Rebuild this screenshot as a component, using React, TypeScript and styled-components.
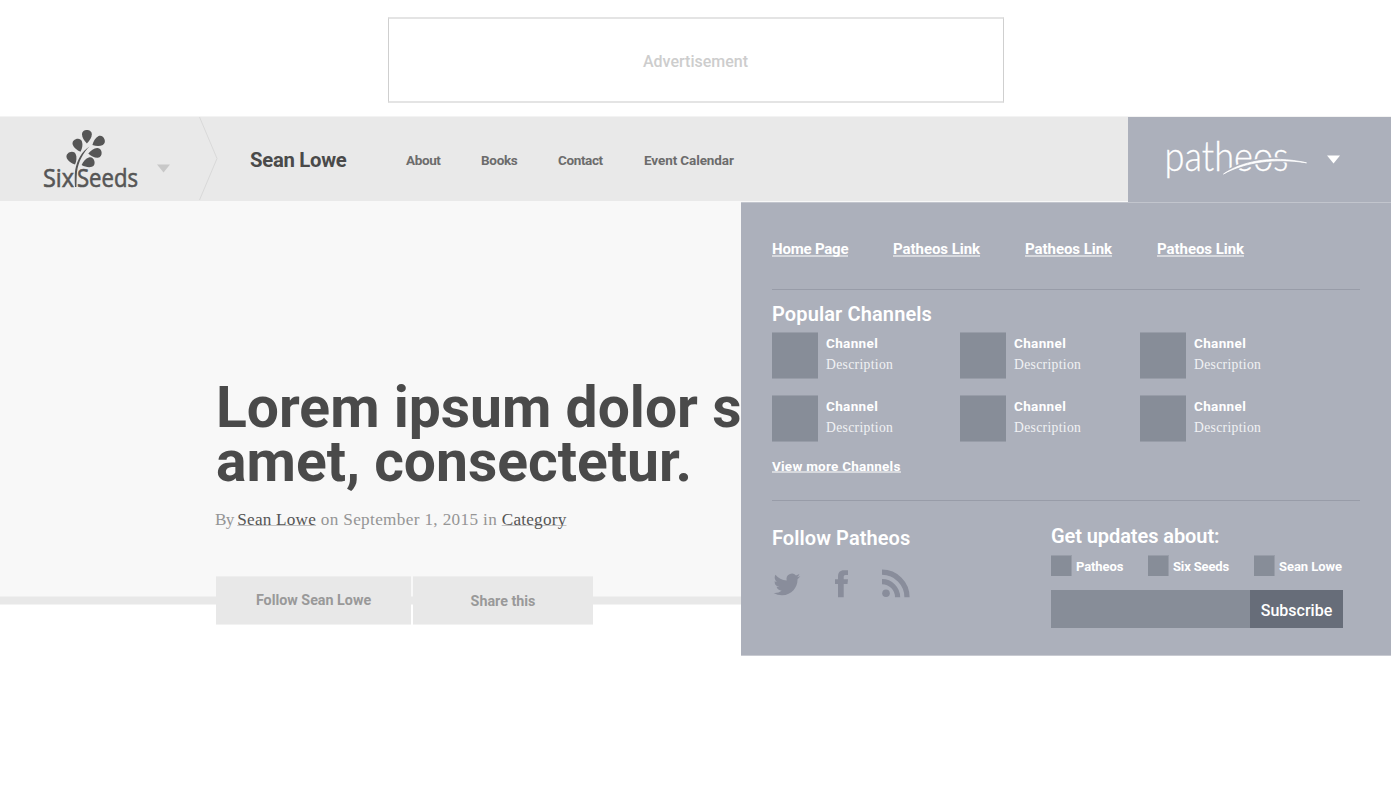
import React from 'react';
import styled, { createGlobalStyle } from 'styled-components';

const sans = `Roboto, "Liberation Sans", sans-serif`;
const serif = `"Liberation Serif", serif`;
const panelBg = '#acb0bb';
const block = '#878d98';
const blockEdge = '#989da8';

const Global = createGlobalStyle`
  * { box-sizing: border-box; }
  body { margin: 0; background: #fff; font-family: ${sans}; }
  h1, h2, p { margin: 0; }
`;

const Page = styled.div`
  width: 1391px;
  height: 794px;
  overflow: hidden;
  display: flex;
  flex-direction: column;
  position: relative;
`;

const AdRow = styled.div`
  height: 116px;
  padding-top: 17px;
  display: flex;
  justify-content: center;
  align-items: flex-start;
`;

const AdBox = styled.div`
  width: 616px;
  height: 86px;
  border: 1px solid #cfcfcf;
  border-top: 2px solid #e4e4e4;
  border-bottom: 2px solid #e4e4e4;
  display: flex;
  align-items: center;
  justify-content: center;
  padding-top: 3px;
  font-size: 16px;
  font-weight: 500;
  color: #cdcdcd;
`;

const Header = styled.header`
  height: 85px;
  display: flex;
  background: #e9e9e9;
  border-top: 1px solid #f3f3f3;
`;

const BrandArea = styled.div`
  width: 250px;
  flex: none;
  height: 84px;
`;

const Author = styled.a`
  width: 156px;
  flex: none;
  padding-top: 31px;
  line-height: 24px;
  font-size: 20.3px;
  font-weight: 700;
  letter-spacing: -0.28px;
  color: #4a4a4a;
`;

const Nav = styled.nav`
  flex: 1;
  display: flex;
  padding-top: 35px;
`;

const NavItem = styled.a<{ $w: number; $ls: number }>`
  width: ${p => p.$w}px;
  white-space: nowrap;
  font-size: 13.5px;
  line-height: 17px;
  font-weight: 700;
  letter-spacing: ${p => p.$ls}px;
  color: #6c6c6c;
`;

const Network = styled.div`
  width: 263px;
  height: 86px;
  flex: none;
  position: relative;
  z-index: 1;
  background: ${panelBg};
`;

const Hero = styled.section`
  height: 403px;
  background: #f8f8f8;
  border-bottom: 7px solid #e8e8e8;
  box-shadow: inset 0 -1px #f0f0f0, 0 1px #f3f3f3;
  padding: 180px 0 0 216px;
`;

const Title = styled.h1`
  font-size: 57px;
  line-height: 53.5px;
  font-weight: 700;
  color: #4a4a4a;
  white-space: nowrap;
`;

const Byline = styled.p`
  margin: 21px 0 0 -1px;
  font-family: ${serif};
  font-size: 17.2px;
  line-height: 22px;
  letter-spacing: 0.22px;
  color: #959595;
  a {
    color: #555;
    text-decoration: underline 1px #c4c4c4;
    text-underline-offset: 0;
    text-decoration-skip-ink: none;
  }
`;

const By = styled.span`
  letter-spacing: -0.7px;
`;

const Dated = styled.span`
  letter-spacing: 0.34px;
`;

const Actions = styled.div`
  display: flex;
  gap: 2px;
  margin-top: 45px;
`;

const Action = styled.button<{ $w: number; $bottom: number }>`
  width: ${p => p.$w}px;
  height: 49px;
  border: 0;
  border-top: 1px solid #eeeeee;
  border-bottom: 1px solid #f2f2f2;
  padding: 0 0 ${p => p.$bottom}px;
  background: #e8e8e8;
  color: #999;
  font: 700 14.3px ${sans};
`;

const Panel = styled.aside`
  position: absolute;
  left: 741px;
  top: 202px;
  z-index: 2;
  width: 650px;
  height: 454px;
  background: ${panelBg};
  border-top: 1px solid #c2c5cd;
  border-bottom: 1px solid #c8cad1;
  color: #fff;
  padding: 36px 31px 0;
`;

const Links = styled.div`
  display: flex;
  height: 50px;
`;

const PanelLink = styled.a<{ $w?: number; $size: number; $ls?: number; $line: number }>`
  width: ${p => (p.$w ? p.$w + 'px' : 'auto')};
  font-size: ${p => p.$size}px;
  line-height: 20px;
  font-weight: 700;
  letter-spacing: ${p => p.$ls ?? 0}px;
  white-space: nowrap;
  span {
    display: inline-block;
    vertical-align: top;
    height: ${p => p.$line}px;
    line-height: 20px;
    border-bottom: 2px solid #d6d8dd;
  }
`;

const Rule = styled.div`
  height: 1px;
  background: #989ca8;
`;

const Heading = styled.h2<{ $ls: number; $top?: number }>`
  margin-top: ${p => p.$top ?? 0}px;
  font-size: 20px;
  line-height: 24px;
  font-weight: 600;
  letter-spacing: ${p => p.$ls}px;
`;

const Channels = styled.div`
  display: grid;
  grid-template-columns: 188px 180px 180px;
  row-gap: 16px;
  margin-top: 6px;
`;

const Channel = styled.div`
  display: flex;
  gap: 8px;
  height: 47px;
`;

const Thumb = styled.div`
  width: 46px;
  height: 47px;
  background: ${block};
  border-top: 1px solid ${blockEdge};
  border-bottom: 1px solid ${blockEdge};
`;

const ChannelText = styled.div`
  display: flex;
  flex-direction: column;
  padding-top: 2px;
`;

const ChannelName = styled.b`
  font-size: 13.5px;
  line-height: 18px;
  letter-spacing: 0.35px;
`;

const ChannelDesc = styled.span`
  font-family: ${serif};
  font-size: 13.6px;
  line-height: 18px;
  margin-top: 4px;
  letter-spacing: 0.34px;
  color: #f1f2f4;
`;

const More = styled.div`
  display: flex;
  margin-top: 14px;
  height: 44px;
`;

const Bottom = styled.div`
  display: flex;
`;

const Follow = styled.div`
  width: 279px;
  padding-top: 25px;
`;

const Social = styled.div`
  padding-top: 19px;
`;

const Updates = styled.div`
  width: 292px;
  padding-top: 23px;
`;

const Checks = styled.div`
  display: flex;
  margin-top: 7px;
  height: 21px;
`;

const Check = styled.label<{ $w: number; $ls: number }>`
  width: ${p => p.$w}px;
  flex: none;
  display: flex;
  gap: 4px;
  font-size: 13px;
  line-height: 24px;
  font-weight: 700;
  letter-spacing: ${p => p.$ls}px;
  white-space: nowrap;
`;

const Box = styled.span`
  width: 21px;
  height: 21px;
  background: ${block};
  border-top: 1px solid ${blockEdge};
  border-right: 1px solid ${blockEdge};
`;

const Form = styled.div`
  display: flex;
  margin-top: 14px;
  height: 38px;
`;

const Field = styled.div`
  flex: 1;
  background: ${block};
`;

const Submit = styled.button`
  width: 93px;
  border: 0;
  padding: 3px 0 0;
  background: #676d79;
  color: #fff;
  font: 500 16px ${sans};
`;

const Drawing = styled.svg`
  display: block;
`;

const leaf = 'M0 0C-2.8-2.6-4.9-6-4.9-9.2C-4.9-14.8 4.9-14.8 4.9-9.2C4.9-6 2.8-2.6 0 0Z';

const SixSeeds = () => (
  <Drawing width="250" height="84" viewBox="0 117 250 84">
    <g fill="#565656">
      <path transform="translate(86.9 143.4)" d={leaf} />
      <path transform="translate(80.5 151.8) rotate(-20)" d={leaf} />
      <path transform="translate(75 164.6) rotate(-24)" d={leaf} />
      <path transform="translate(92.4 145) rotate(62)" d={leaf} />
      <path transform="translate(88.3 153.6) rotate(86)" d={leaf} />
      <path transform="translate(81.6 165) rotate(72)" d={leaf} />
      <path d="M89.5 146.4C83.5 152 78 162 77 172C76.5 178 76.6 182 76.4 187H75C74.6 180 74.6 174 75.2 170C77 160 82 151 89.5 146.4Z" />
      <g fontFamily="Open Sans, sans-serif" fontSize="25.5" fontWeight="500" stroke="#565656" strokeWidth=".6">
        <text x="43" y="187" textLength="31" lengthAdjust="spacingAndGlyphs">Six</text>
        <text x="77" y="187" textLength="61" lengthAdjust="spacingAndGlyphs">Seeds</text>
      </g>
    </g>
    <path d="M157 164.5H170L163.5 172.5Z" fill="#c8c8c8" />
    <path d="M199.5 117L217 158.5L199.5 200" fill="none" stroke="#d9d9d9" />
  </Drawing>
);

const PatheosLogo = () => (
  <Drawing width="263" height="86" viewBox="1128 117 263 86">
    <text x="1164.5" y="171" textLength="124" lengthAdjust="spacingAndGlyphs" fontFamily="Lato, sans-serif" fontWeight="300" fontSize="40.5" fill="#fff" stroke="#fff" strokeWidth=".3">patheos</text>
    <path d="M1223.5 174C1240 162 1270 154 1306.5 162.8C1275 157.5 1245 162 1223.5 174Z" fill="#fff" stroke={panelBg} strokeWidth="3.2" />
    <path d="M1223.5 174C1240 162.500 1270 154.5 1306.5 162.8C1275 157.8 1245 162 1223.5 174Z" fill="#fff" stroke="#fff" strokeWidth=".8" />
    <path d="M1327 155.5H1340L1333.5 163.5Z" fill="#fff" />
    <path d="M1128 202.5H1391" stroke="#c2c5cd" />
  </Drawing>
);

const SocialIcons = () => (
  <Drawing width="140" height="30" viewBox="772 569 140 30" fill="#898d9b">
    <path transform="translate(773.6 571.2) scale(1.11)" d="M23.95 4.57a10 10 0 0 1-2.82.77 4.96 4.96 0 0 0 2.16-2.72c-.95.55-2 .95-3.13 1.18a4.92 4.92 0 0 0-8.38 4.48C7.69 8.09 4.07 6.13 1.64 3.16a4.82 4.82 0 0 0-.67 2.47c0 1.71.87 3.21 2.19 4.1a4.9 4.9 0 0 1-2.23-.62v.06a4.92 4.92 0 0 0 3.95 4.83 5 5 0 0 1-2.21.08 4.94 4.94 0 0 0 4.6 3.42A9.87 9.87 0 0 1 0 19.54a13.99 13.99 0 0 0 7.56 2.21c9.05 0 14-7.5 14-13.98 0-.21 0-.42-.02-.63a9.94 9.94 0 0 0 2.46-2.55z" />
    <path d="M848 570.3V575H845.5C844.2 575 843.7 575.7 843.7 577V579.3H848L847.5 584H843.7V597.3H838V584H835V579.3H838V576.5C838 572.5 840 570.3 844 570.3Z" />
    <circle cx="886" cy="593.3" r="3.8" />
    <path d="M882 572.2A25 25 0 0 1 907 597.3M882 581.7A15.6 15.6 0 0 1 897.6 597.3" fill="none" stroke="#898d9b" strokeWidth="5.2" />
  </Drawing>
);

export default function App() {
  return (
    <Page>
      <Global />
      <AdRow><AdBox>Advertisement</AdBox></AdRow>
      <Header>
        <BrandArea><SixSeeds /></BrandArea>
        <Author>Sean Lowe</Author>
        <Nav>
          <NavItem $w={75} $ls={-0.38}>About</NavItem>
          <NavItem $w={77} $ls={-0.3}>Books</NavItem>
          <NavItem $w={86} $ls={-0.38}>Contact</NavItem>
          <NavItem $w={100} $ls={-0.1}>Event Calendar</NavItem>
        </Nav>
        <Network><PatheosLogo /></Network>
      </Header>
      <Hero>
        <Title>Lorem ipsum dolor sit<br />amet, consectetur.</Title>
        <Byline><By>By </By><a>Sean Lowe</a><Dated> on September 1, 2015 in </Dated><a>Category</a></Byline>
        <Actions>
          <Action $w={195} $bottom={1}>Follow Sean Lowe</Action>
          <Action $w={180} $bottom={0}>Share this</Action>
        </Actions>
      </Hero>
      <Panel>
        <Links>
          <PanelLink $w={121} $size={15} $ls={-0.2} $line={18}><span>Home Page</span></PanelLink>
          <PanelLink $w={132} $size={15} $ls={-0.05} $line={18}><span>Patheos Link</span></PanelLink>
          <PanelLink $w={132} $size={15} $ls={-0.05} $line={18}><span>Patheos Link</span></PanelLink>
          <PanelLink $size={15} $ls={-0.05} $line={18}><span>Patheos Link</span></PanelLink>
        </Links>
        <Rule />
        <Heading $ls={0.12} $top={12}>Popular Channels</Heading>
        <Channels>
          {[0, 1, 2, 3, 4, 5].map(i => (
            <Channel key={i}>
              <Thumb />
              <ChannelText>
                <ChannelName>Channel</ChannelName>
                <ChannelDesc>Description</ChannelDesc>
              </ChannelText>
            </Channel>
          ))}
        </Channels>
        <More><PanelLink $size={13.5} $ls={0.24} $line={17}><span>View more Channels</span></PanelLink></More>
        <Rule />
        <Bottom>
          <Follow>
            <Heading $ls={0.08}>Follow Patheos</Heading>
            <Social><SocialIcons /></Social>
          </Follow>
          <Updates>
            <Heading $ls={-0.08}>Get updates about:</Heading>
            <Checks>
              <Check $w={97} $ls={-0.1}><Box />Patheos</Check>
              <Check $w={106} $ls={-0.15}><Box />Six Seeds</Check>
              <Check $w={92} $ls={-0.05}><Box />Sean Lowe</Check>
            </Checks>
            <Form><Field /><Submit>Subscribe</Submit></Form>
          </Updates>
        </Bottom>
      </Panel>
    </Page>
  );
}
